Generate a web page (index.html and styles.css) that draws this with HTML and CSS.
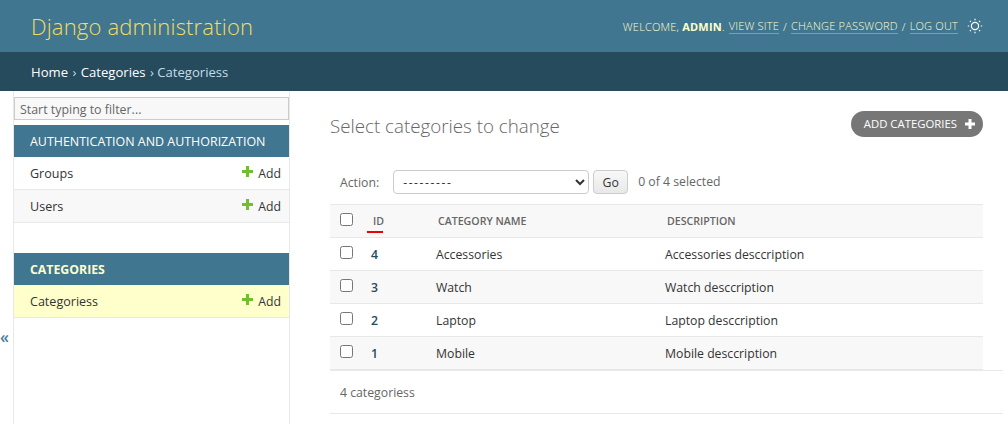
FILE: index.html
```html
<!DOCTYPE html>
<html lang="en">
<head>
<meta charset="utf-8">
<title>Select categories to change</title>
<link rel="stylesheet" href="styles.css">
</head>
<body>
<header class="header">
  <h1 class="brand">Django administration</h1>
  <div class="tools">
    <span>Welcome, <strong>admin</strong>.</span>
    <a href="#">View site</a><span>/</span><a href="#">Change password</a><span>/</span><a href="#">Log out</a>
    <svg class="sun" width="16" height="16" viewBox="0 0 16 16" fill="none" stroke="#fff" stroke-width="1.2"><circle cx="8" cy="8" r="3.6"/><path d="M8 .8v1.4M8 13.8v1.4M.8 8h1.4M13.8 8h1.4M2.9 2.9l1 1M12.1 12.1l1 1M2.9 13.1l1-1M12.1 3.9l1-1"/></svg>
  </div>
</header>
<nav class="crumbs"><a href="#">Home</a> › <a href="#">Categories</a> › Categoriess</nav>
<div class="main">
  <div class="toggle"><span>«</span></div>
  <aside class="side">
    <input class="filter" placeholder="Start typing to filter...">
    <section class="app">
      <h2 class="app-title">Authentication and Authorization</h2>
      <div class="model"><a href="#">Groups</a><span class="add"><svg width="11" height="11" viewBox="0 0 11 11"><path fill="#70bf2b" d="M4 0h3v4h4v3H7v4H4V7H0V4h4z"/></svg>Add</span></div>
      <div class="model alt"><a href="#">Users</a><span class="add"><svg width="11" height="11" viewBox="0 0 11 11"><path fill="#70bf2b" d="M4 0h3v4h4v3H7v4H4V7H0V4h4z"/></svg>Add</span></div>
    </section>
    <section class="app">
      <h2 class="app-title strong">Categories</h2>
      <div class="model current"><a href="#">Categoriess</a><span class="add"><svg width="11" height="11" viewBox="0 0 11 11"><path fill="#70bf2b" d="M4 0h3v4h4v3H7v4H4V7H0V4h4z"/></svg>Add</span></div>
    </section>
  </aside>
  <main class="content">
    <div class="title-row">
      <h1 class="title">Select categories to change</h1>
      <a class="add-btn" href="#"><span class="add-label">Add categories</span><svg width="10" height="10" viewBox="0 0 10 10"><path fill="#fff" d="M3.5 0h3v3.5H10v3H6.5V10h-3V6.5H0v-3h3.5z"/></svg></a>
    </div>
    <div class="actions">
      <label>Action:</label>
      <select class="action-select"><option>---------</option></select>
      <button class="go">Go</button>
      <span class="count">0 of 4 selected</span>
    </div>
    <table class="list">
      <thead>
        <tr>
          <th class="c-check"><input type="checkbox"></th>
          <th class="c-id"><span class="id-head">ID</span></th>
          <th class="c-name">Category name</th>
          <th class="c-desc">Description</th>
        </tr>
      </thead>
      <tbody>
        <tr><td class="c-check"><input type="checkbox"></td><td class="id"><a href="#">4</a></td><td>Accessories</td><td>Accessories desccription</td></tr>
        <tr class="alt"><td class="c-check"><input type="checkbox"></td><td class="id"><a href="#">3</a></td><td>Watch</td><td>Watch desccription</td></tr>
        <tr><td class="c-check"><input type="checkbox"></td><td class="id"><a href="#">2</a></td><td>Laptop</td><td>Laptop desccription</td></tr>
        <tr class="alt"><td class="c-check"><input type="checkbox"></td><td class="id"><a href="#">1</a></td><td>Mobile</td><td>Mobile desccription</td></tr>
      </tbody>
    </table>
    <p class="paginator">4 categoriess</p>
  </main>
</div>
</body>
</html>
```
FILE: styles.css
```css
* { box-sizing: border-box; }
html, body { margin: 0; height: 100%; overflow: hidden; }
body { font-family: "Open Sans", "Noto Sans", sans-serif; font-size: 12.25px; color: #333; background: #fff; }
a { text-decoration: none; color: inherit; }
.header { height: 52px; background: #417690; color: #ffc; display: flex; align-items: center; justify-content: space-between; padding: 0 25px 0 31px; }
.brand { margin: 0; font-size: 22px; font-weight: 300; color: #f5dd5d; letter-spacing: .18px; }
.tools { display: flex; align-items: center; gap: 4px; font-size: 11px; text-transform: uppercase; font-weight: 300; letter-spacing: .2px; }
.tools a { border-bottom: 1px solid rgba(255,255,255,.3); line-height: 13px; padding-bottom: 1px; margin-top: 1px; }
.tools strong { font-weight: 700; }
.sun { margin-left: 5px; }
.crumbs { height: 39px; background: #264b5d; color: #c4dce8; padding: 1px 0 0 31px; display: flex; align-items: center; gap: 1px; white-space: pre; font-size: 13.1px; }
.crumbs a { color: #fff; }
.main { display: flex; height: 333px; }
.toggle { width: 14px; display: flex; align-items: flex-end; padding-bottom: 78px; color: #447e9b; font-size: 16px; font-weight: 600; line-height: 18px; background: #fff; border-right: 1px solid #e8e8e8; }
.side { width: 276px; border-right: 1px solid #e8e8e8; padding-top: 6px; flex: none; }
.filter { display: block; width: 275px; height: 23px; margin: 0 0 5px 0; padding: 3px 5px 2px; border: 1px solid #ccc; background: #f8f8f8; font: 12.4px "Open Sans", sans-serif; }
.filter::placeholder { color: #666; opacity: 1; }
.app { margin-bottom: 30px; }
.app-title { margin: 0; height: 32px; background: #417690; color: #fff; font-size: 12.45px; font-weight: 400; text-transform: uppercase; display: flex; align-items: center; padding-left: 16px; }
.app-title.strong { font-size: 12.3px; font-weight: 700; color: #ffc; }
.model { height: 33px; display: flex; align-items: center; justify-content: space-between; padding: 0 8px 0 16px; border-bottom: 1px solid #e8e8e8; background: #fff; font-size: 12.55px; }
.model.alt { background: #f8f8f8; }
.model.current { background: #ffc; }
.add { display: flex; align-items: center; gap: 5px; font-size: 12.25px; margin-left: -1px; }
.add svg { margin-top: -4px; }
.content { flex: 1; min-width: 0; padding: 20px 5px 0 40px; }
.title-row { display: flex; justify-content: space-between; align-items: flex-start; padding-right: 20px; height: 59px; }
.title { margin: 2px 0 0; font-size: 18.75px; font-weight: 300; color: #666; }
.add-btn { height: 26px; border-radius: 13px; background: #777; color: #fff; font-size: 11.35px; text-transform: uppercase; display: flex; align-items: center; gap: 8px; padding: 0 8px 0 13px; }
.add-label { margin-top: -2px; }
.actions { height: 24px; margin-bottom: 11px; padding-left: 10px; display: flex; align-items: center; color: #666; }
.action-select { width: 196px; height: 24px; margin-left: 14px; border: 1px solid #ccc; border-radius: 4px; background: #fff; font: 12px "Open Sans", sans-serif; letter-spacing: 1.6px; padding-left: 5px; color: #333; }
.go { width: 35px; height: 24px; margin-left: 4px; border: 1px solid #ccc; border-radius: 4px; background: linear-gradient(#f8f8f8, #e8e8e8); font: 12.25px "Open Sans", sans-serif; color: #333; padding: 0; }
.count { margin: -2px 0 0 10px; }
.list { width: 653px; border-collapse: separate; border-spacing: 0; table-layout: fixed; margin-top: -1px; }
.list th, .list td { height: 33px; padding: 0; text-align: left; border-bottom: 1px solid #e8e8e8; vertical-align: middle; }
.list th { height: 34px; background: #f8f8f8; border-top: 1px solid #e8e8e8; color: #666; font-size: 10.6px; text-transform: uppercase; font-weight: 600; padding-left: 2px; }
.list tr.alt td { background: #f8f8f8; }
.c-check { width: 36px; padding-left: 10px !important; }
.c-check input { margin: 0 0 4px; width: 13px; height: 13px; display: block; }
.c-id { width: 70px; padding-left: 7px !important; }
.id-head { display: inline-block; position: relative; }
.id-head::after { content: ""; position: absolute; left: -6px; width: 16px; bottom: -5px; height: 2px; background: #e00; }
.c-name { width: 229px; }
.id { font-weight: 600; color: #264b5d; padding-left: 5px !important; }
.paginator { margin: 0; height: 44px; line-height: 43px; padding-left: 10px; border-top: 1px solid #e8e8e8; border-bottom: 1px solid #e8e8e8; color: #666; }
```
